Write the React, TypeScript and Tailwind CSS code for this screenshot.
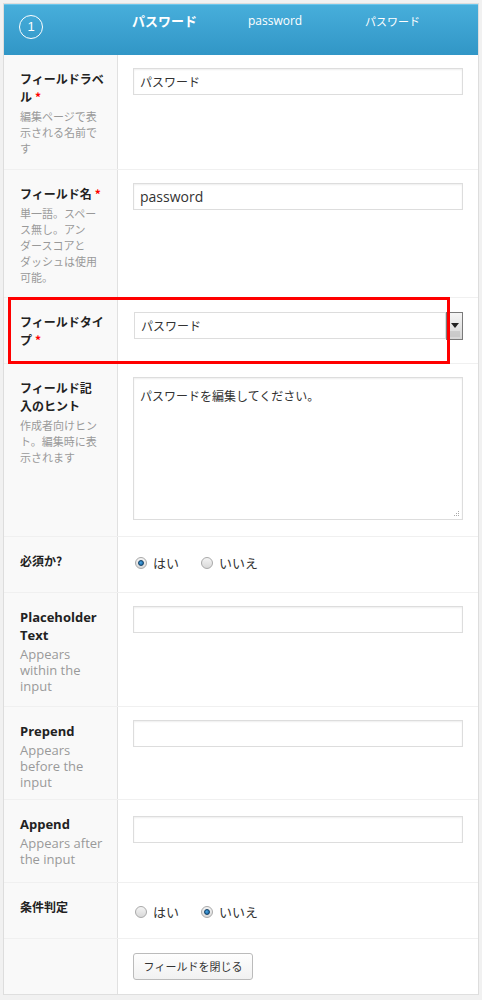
import { FC, ReactNode } from "react";

const jp = "font-['Noto_Sans_CJK_JP','Noto_Sans',sans-serif]";
const en = "font-['Open_Sans','Noto_Sans_CJK_JP',sans-serif]";

const Req = () => <span className="text-[#ff0000] ml-[3px]">*</span>;

interface RowProps {
  h: string;
  label: ReactNode;
  hint?: ReactNode;
  children?: ReactNode;
  english?: boolean;
  last?: boolean;
}

const Row: FC<RowProps> = ({ h, label, hint, children, english, last }) => (
  <div className={`flex ${h} ${last ? "border-b border-[#dfdfdf]" : "border-b border-[#f0f0f0]"}`}>
    <div className="w-[114px] shrink-0 bg-[#f9f9f9] border-r border-[#e1e1e1] pl-[16px] pr-[8px] pt-[15px]">
      <div
        className={`${english ? en + " text-[13px]" : jp + " text-[12px] whitespace-nowrap"} leading-[18px] font-bold text-[#222]`}
      >
        {label}
      </div>
      {hint && (
        <div
          className={`${english ? en + " text-[13px]" : jp + " text-[11px] whitespace-nowrap"} leading-[16px] text-[#999] mt-[2px]`}
        >
          {hint}
        </div>
      )}
    </div>
    <div className="flex-1 pl-[15px] pr-[15px] pt-[13px]">{children}</div>
  </div>
);

const Input = ({ value, mono }: { value?: string; mono?: boolean }) => (
  <div
    className={`h-[27px] w-full border border-[#dddddd] bg-white shadow-[inset_0_1px_2px_rgba(0,0,0,0.07)] px-[6px] flex items-center text-[#333] ${
      mono ? en + " text-[14px]" : jp + " text-[12px]"
    }`}
  >
    {value}
  </div>
);

const Radio = ({ checked }: { checked?: boolean }) => (
  <span className="w-[12px] h-[12px] rounded-full border border-[#a9a9a9] bg-gradient-to-b from-[#f4f4f4] to-[#d9d9d9] flex items-center justify-center shrink-0">
    {checked && (
      <span className="w-[6px] h-[6px] rounded-full bg-[radial-gradient(circle_at_40%_40%,#4aa3e0,#125d99)] border border-[#0f3f66]" />
    )}
  </span>
);

const Radios = ({ yes }: { yes: boolean }) => (
  <div className={`flex items-center ml-[2px] ${jp} text-[13px] text-[#333]`}>
    <Radio checked={yes} />
    <span className="ml-[6px]">はい</span>
    <span className="ml-[22px]" />
    <Radio checked={!yes} />
    <span className="ml-[6px]">いいえ</span>
  </div>
);

export default function App() {
  return (
    <div className="relative w-[482px] min-h-[1000px] bg-[#f1f1f1] pl-[3px] pt-[3px]">
      <div className="w-[476px] border-l border-r border-t border-[#dddddd] bg-white">
        {/* header */}
        <div className="h-[51px] bg-gradient-to-b from-[#47aedb] to-[#3196c6] border-t border-[#6cc6ec] flex items-start text-white">
          <div className="ml-[15px] mt-[10px] w-[24px] h-[24px] rounded-full border border-white flex items-center justify-center text-[13px] font-['Liberation_Sans',sans-serif]">
            1
          </div>
          <div className={`ml-[89px] mt-[7px] w-[116px] ${jp} text-[13px] font-bold leading-[18px]`}>
            パスワード
          </div>
          <div className={`w-[117px] mt-[7px] ${en} text-[12px] leading-[18px]`}>password</div>
          <div className={`w-[100px] mt-[7px] ${jp} text-[11px] leading-[18px]`}>パスワード</div>
        </div>

        <Row
          h="h-[115px]"
          label={
            <>
              フィールドラベ
              <br />ル<Req />
            </>
          }
          hint={
            <>
              編集ページで表
              <br />
              示される名前で
              <br />す
            </>
          }
        >
          <Input value="パスワード" />
        </Row>

        <Row
          h="h-[128px]"
          label={
            <>
              フィールド名<Req />
            </>
          }
          hint={
            <>
              単一語。スペー
              <br />
              ス無し。アン
              <br />
              ダースコアと
              <br />
              ダッシュは使用
              <br />
              可能。
            </>
          }
        >
          <Input value="password" mono />
        </Row>

        <Row
          h="h-[66px]"
          label={
            <>
              フィールドタイ
              <br />プ<Req />
            </>
          }
        >
          <div className="flex pt-[1px]">
            <div
              className={`h-[27px] flex-1 ml-[1px] border border-[#dddddd] bg-white px-[6px] flex items-center text-[12px] text-[#333] ${jp}`}
            >
              パスワード
            </div>
            <div className="w-[17px] h-[28px] border border-[#7a7a7a] bg-gradient-to-b from-[#f5f5f5] to-[#d6d6d6] flex flex-col items-center pt-[10px]">
              <svg width="8" height="5" viewBox="0 0 8 5">
                <path d="M0 0h8L4 5z" fill="#222" />
              </svg>
              <div className="mt-[3px] w-[10px] h-[6px] bg-[radial-gradient(#b5b5b5_0.6px,transparent_0.8px)] bg-[length:2px_2px]" />
            </div>
          </div>
        </Row>

        <Row
          h="h-[173px]"
          label={
            <>
              フィールド記
              <br />
              入のヒント
            </>
          }
          hint={
            <>
              作成者向けヒン
              <br />
              ト。編集時に表
              <br />
              示されます
            </>
          }
        >
          <div className="relative h-[143px] w-full border border-[#dddddd] bg-white shadow-[inset_0_1px_2px_rgba(0,0,0,0.07)] px-[6px] pt-[5px]">
            <span className={`${jp} text-[12px] text-[#333] leading-[18px]`}>
              パスワードを編集してください。
            </span>
            <svg className="absolute right-[2px] bottom-[2px]" width="7" height="7" viewBox="0 0 7 7">
              <rect x="5" y="1" width="1" height="1" fill="#aaa" />
              <rect x="3" y="3" width="1" height="1" fill="#aaa" />
              <rect x="5" y="3" width="1" height="1" fill="#aaa" />
              <rect x="1" y="5" width="1" height="1" fill="#aaa" />
              <rect x="3" y="5" width="1" height="1" fill="#aaa" />
              <rect x="5" y="5" width="1" height="1" fill="#aaa" />
            </svg>
          </div>
        </Row>

        <Row h="h-[56px]" label="必須か?">
          <div className="pt-[3px]">
            <Radios yes />
          </div>
        </Row>

        <Row h="h-[114px]" english label="Placeholder Text" hint="Appears within the input">
          <Input />
        </Row>

        <Row h="h-[93px]" english label="Prepend" hint="Appears before the input">
          <Input />
        </Row>

        <Row h="h-[83px]" english label="Append" hint="Appears after the input">
          <div className="pt-[3px]">
            <Input />
          </div>
        </Row>

        <Row h="h-[56px]" label="条件判定">
          <div className="pt-[6px]">
            <Radios yes={false} />
          </div>
        </Row>

        <Row h="h-[56px]" label="" last>
          <div className="pt-[1px]">
            <button
              className={`h-[27px] w-[120px] rounded-[3px] border border-[#bbbbbb] bg-gradient-to-b from-[#fefefe] to-[#f1f1f1] ${jp} text-[11px] text-[#333]`}
            >
              フィールドを閉じる
            </button>
          </div>
        </Row>
      </div>

      {/* red annotation box */}
      <div className="absolute left-[8px] top-[297px] w-[442px] h-[67px] border-[3px] border-[#ff0000] pointer-events-none" />
    </div>
  );
}
